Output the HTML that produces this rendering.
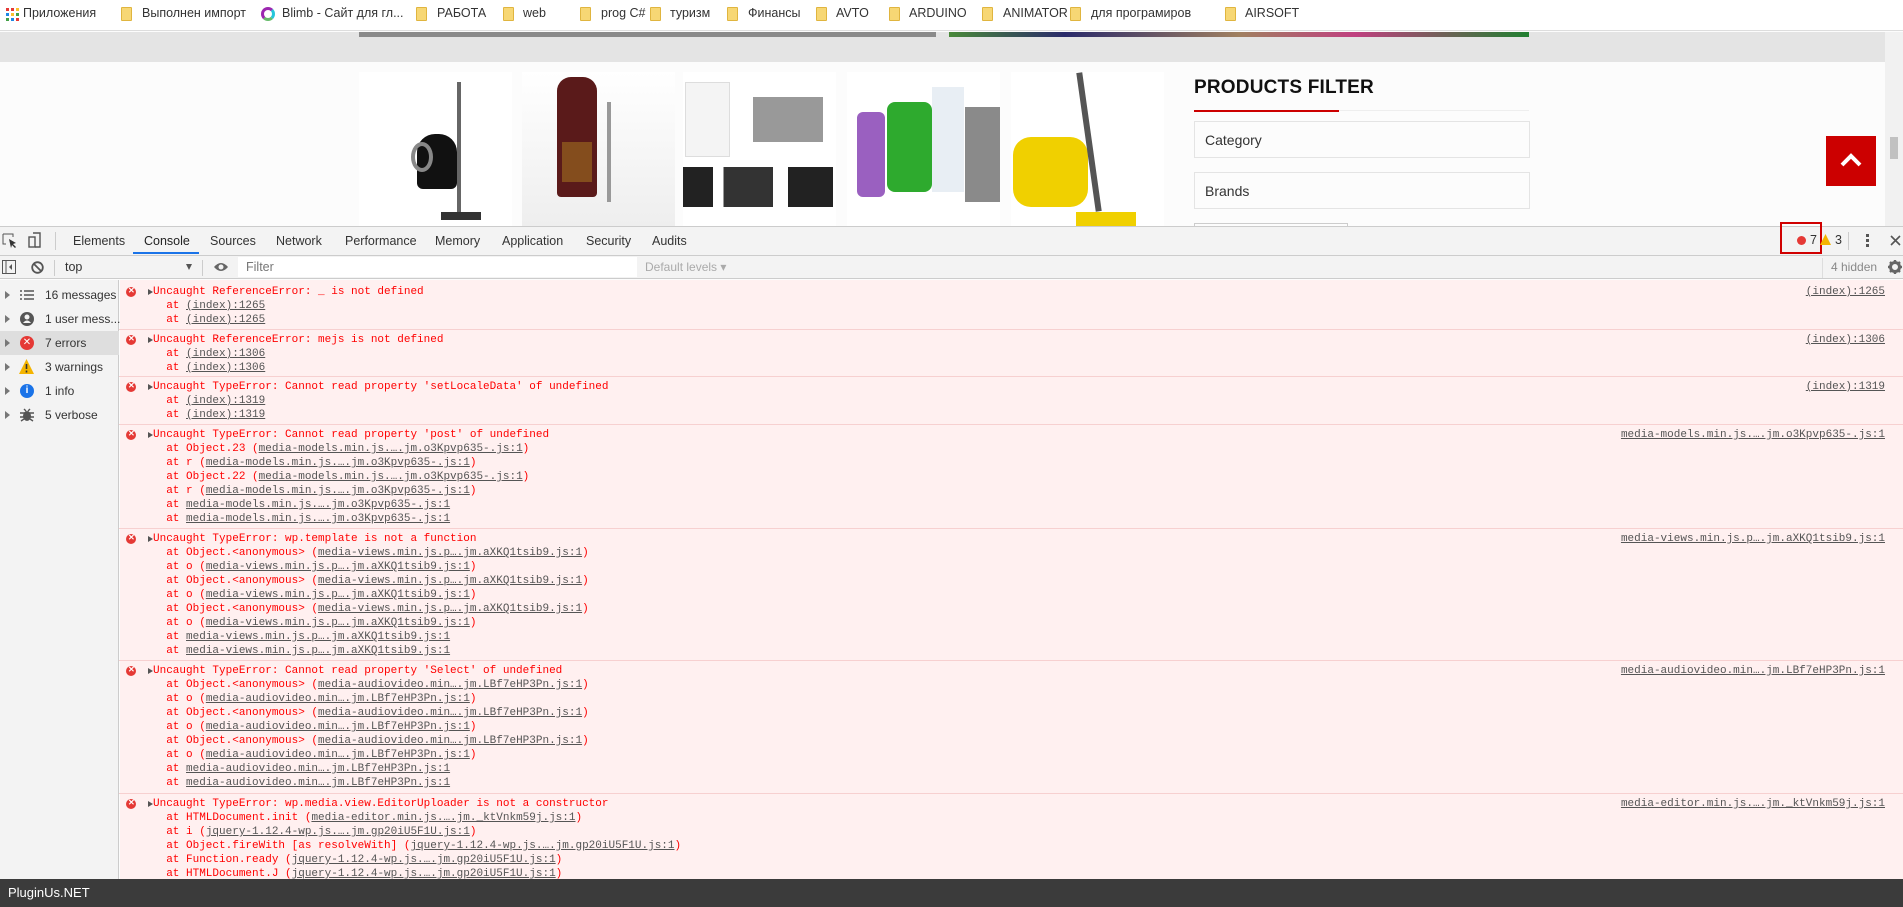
<!DOCTYPE html>
<html><head><meta charset="utf-8"><style>
*{margin:0;padding:0;box-sizing:border-box}
body{width:1903px;height:907px;overflow:hidden;background:#fcfcfc;font-family:"Liberation Sans","Noto Sans CJK SC",sans-serif;position:relative}
.abs{position:absolute}
.bm{position:absolute;top:0;height:30px;line-height:26px;font-size:12.5px;color:#333;white-space:nowrap}
.fold{position:absolute;top:7px;width:11px;height:14px;background:#f7d774;border:1px solid #e0b53f;border-radius:1px}
.card{position:absolute;top:72px;width:153px;height:155px;background:#fff}
.fbox{position:absolute;left:1194px;width:336px;height:37px;border:1px solid #e4e4e4;background:#fcfcfc;font-size:14px;color:#333;padding:10px 0 0 10px}
.tab{position:absolute;top:227px;height:28px;line-height:28px;font-size:12.5px;color:#333}
.mono{font-family:"Liberation Mono","DejaVu Sans Mono",monospace;font-size:11px;line-height:14px}
.msg{position:absolute;left:119px;right:0;border-top:1px solid #f7d0d0;color:#f00;padding-top:3px}
.msg .l{padding-left:34px;white-space:pre;height:14px}
.msg .h{padding-left:34px;white-space:pre;position:relative}
.msg .h:before{content:"";position:absolute;left:7px;top:2px;width:10px;height:10px;border-radius:50%;background:#e53935}
.msg .h:after{content:"";position:absolute;left:29px;top:4px;border-left:5px solid #555;border-top:3px solid transparent;border-bottom:3px solid transparent}
.msg .h span.x{position:absolute;left:9px;top:-1px;color:#fff;font-size:8px;font-family:"Liberation Sans",sans-serif;font-weight:bold}
.u{text-decoration:underline;color:#555}
.src{position:absolute;right:18px;top:3px;color:#555;text-decoration:underline}
.side{position:absolute;left:0;width:119px;height:24px;font-size:12px;color:#333;line-height:24px}
.side .ar{position:absolute;left:5px;top:8px;border-left:5px solid #777;border-top:4px solid transparent;border-bottom:4px solid transparent}
.side .t{position:absolute;left:45px;white-space:nowrap}
</style></head><body>

<!-- bookmarks bar -->
<div class="abs" style="left:0;top:0;width:1903px;height:31px;background:#fff;border-bottom:1px solid #ddd"></div>
<svg class="abs" style="left:6px;top:8px" width="13" height="13"><g>
<rect x="0" y="0" width="3" height="3" fill="#e53935"/><rect x="5" y="0" width="3" height="3" fill="#e53935"/><rect x="10" y="0" width="3" height="3" fill="#fbc02d"/>
<rect x="0" y="5" width="3" height="3" fill="#1e88e5"/><rect x="5" y="5" width="3" height="3" fill="#fbc02d"/><rect x="10" y="5" width="3" height="3" fill="#43a047"/>
<rect x="0" y="10" width="3" height="3" fill="#43a047"/><rect x="5" y="10" width="3" height="3" fill="#1e88e5"/><rect x="10" y="10" width="3" height="3" fill="#e53935"/></g></svg>
<div class="bm" style="left:23px">Приложения</div>
<div class="fold" style="left:121px"></div><div class="bm" style="left:142px">Выполнен импорт</div>
<div class="abs" style="left:261px;top:7px;width:14px;height:14px;border-radius:50%;border:3px solid #9c27b0;border-right-color:#26c6da;border-bottom-color:#66bb6a"></div><div class="bm" style="left:282px">Blimb - Сайт для гл...</div>
<div class="fold" style="left:416px"></div><div class="bm" style="left:437px">РАБОТА</div>
<div class="fold" style="left:503px"></div><div class="bm" style="left:523px">web</div>
<div class="fold" style="left:580px"></div><div class="bm" style="left:601px">prog C#</div>
<div class="fold" style="left:650px"></div><div class="bm" style="left:670px">туризм</div>
<div class="fold" style="left:727px"></div><div class="bm" style="left:748px">Финансы</div>
<div class="fold" style="left:816px"></div><div class="bm" style="left:836px">AVTO</div>
<div class="fold" style="left:889px"></div><div class="bm" style="left:909px">ARDUINO</div>
<div class="fold" style="left:982px"></div><div class="bm" style="left:1003px">ANIMATOR</div>
<div class="fold" style="left:1070px"></div><div class="bm" style="left:1091px">для програмиров</div>
<div class="fold" style="left:1225px"></div><div class="bm" style="left:1245px">AIRSOFT</div>

<!-- page -->
<div class="abs" style="left:0;top:32px;width:1885px;height:30px;background:#e4e4e4"></div>
<div class="abs" style="left:359px;top:32px;width:577px;height:5px;background:#8a8a8a"></div>
<div class="abs" style="left:949px;top:32px;width:580px;height:5px;background:linear-gradient(90deg,#4a8a3a,#2a2a6a 20%,#a08060 50%,#c04080 70%,#208030)"></div>
<div class="abs" style="left:1885px;top:32px;width:18px;height:195px;background:#f1f1f1"></div>
<div class="abs" style="left:1890px;top:137px;width:8px;height:22px;background:#c1c1c1"></div>

<div class="card" style="left:359px">
 <div class="abs" style="left:58px;top:62px;width:40px;height:55px;border-radius:18px 18px 6px 6px;background:#111"></div>
 <div class="abs" style="left:52px;top:70px;width:22px;height:30px;border-radius:50%;border:4px solid #888"></div>
 <div class="abs" style="left:98px;top:10px;width:4px;height:130px;background:#666"></div>
 <div class="abs" style="left:82px;top:140px;width:40px;height:8px;background:#333"></div>
</div>
<div class="card" style="left:522px;background:linear-gradient(#fff,#eee)">
 <div class="abs" style="left:35px;top:5px;width:40px;height:120px;border-radius:14px 14px 4px 4px;background:#5a1a1a"></div>
 <div class="abs" style="left:40px;top:70px;width:30px;height:40px;background:#a07020;opacity:.6"></div>
 <div class="abs" style="left:85px;top:30px;width:4px;height:100px;background:#999"></div>
</div>
<div class="card" style="left:683px">
 <div class="abs" style="left:2px;top:10px;width:45px;height:75px;background:#f4f4f4;border:1px solid #ddd"></div>
 <div class="abs" style="left:70px;top:25px;width:70px;height:45px;background:#999"></div>
 <div class="abs" style="left:0;top:95px;width:150px;height:40px;background:linear-gradient(90deg,#222 0 20%,#fff 20% 27%,#333 27% 60%,#fff 60% 70%,#222 70%)"></div>
</div>
<div class="card" style="left:847px">
 <div class="abs" style="left:10px;top:40px;width:28px;height:85px;background:#9a60c0;border-radius:6px"></div>
 <div class="abs" style="left:40px;top:30px;width:45px;height:90px;background:#2eaa2e;border-radius:8px"></div>
 <div class="abs" style="left:85px;top:15px;width:32px;height:105px;background:#e8eef4"></div>
 <div class="abs" style="left:118px;top:35px;width:35px;height:95px;background:#8a8a8a"></div>
</div>
<div class="card" style="left:1011px">
 <div class="abs" style="left:2px;top:65px;width:75px;height:70px;background:#f0d000;border-radius:18px"></div>
 <div class="abs" style="left:75px;top:0;width:6px;height:140px;background:#555;transform:rotate(-8deg)"></div>
 <div class="abs" style="left:65px;top:140px;width:60px;height:15px;background:#f0d000"></div>
</div>

<div class="abs" style="left:1194px;top:77px;font-size:19px;font-weight:bold;color:#111;letter-spacing:.2px">PRODUCTS FILTER</div>
<div class="abs" style="left:1194px;top:110px;width:145px;height:2px;background:#cc0000"></div>
<div class="abs" style="left:1339px;top:110px;width:190px;height:1px;background:#eee"></div>
<div class="fbox" style="top:121px">Category</div>
<div class="fbox" style="top:172px">Brands</div>
<div class="abs" style="left:1194px;top:223px;width:154px;height:5px;border:1px solid #ccc;border-bottom:none"></div>
<div class="abs" style="left:1826px;top:136px;width:50px;height:50px;background:#cc0000"></div>
<svg class="abs" style="left:1839px;top:152px" width="24" height="16"><path d="M3 13 L12 4 L21 13" stroke="#fff" stroke-width="4" fill="none"/></svg>

<!-- devtools tab bar -->
<div class="abs" style="left:0;top:226px;width:1903px;height:30px;background:#f3f3f3;border-top:1px solid #ccc;border-bottom:1px solid #ccc"></div>
<svg class="abs" style="left:2px;top:233px" width="16" height="16"><path d="M1 1h10v3M1 1v10h3" stroke="#555" fill="none"/><path d="M7 6l7 4-3 1 3 3-1 1-3-3-1 3z" fill="#333"/></svg>
<svg class="abs" style="left:28px;top:232px" width="14" height="17"><rect x="1" y="5" width="6" height="10" fill="none" stroke="#555" stroke-width="1.4"/><path d="M5 1h7v14H7" fill="none" stroke="#555" stroke-width="1.4"/></svg>
<div class="abs" style="left:55px;top:232px;width:1px;height:18px;background:#ccc"></div>
<div class="tab" style="left:73px">Elements</div>
<div class="tab" style="left:144px;color:#222">Console</div>
<div class="abs" style="left:133px;top:252px;width:66px;height:2px;background:#1a73e8"></div>
<div class="tab" style="left:210px">Sources</div>
<div class="tab" style="left:276px">Network</div>
<div class="tab" style="left:345px">Performance</div>
<div class="tab" style="left:435px">Memory</div>
<div class="tab" style="left:502px">Application</div>
<div class="tab" style="left:586px">Security</div>
<div class="tab" style="left:652px">Audits</div>
<div class="abs" style="left:1780px;top:222px;width:42px;height:32px;border:2px solid #d00000"></div>
<div class="abs" style="left:1797px;top:236px;width:9px;height:9px;border-radius:50%;background:#e53935"></div>
<div class="tab" style="left:1810px;top:226px">7</div>
<svg class="abs" style="left:1820px;top:234px" width="11" height="11"><path d="M5.5 0L11 11H0z" fill="#f4b400"/></svg>
<div class="tab" style="left:1835px;top:226px">3</div>
<div class="abs" style="left:1848px;top:232px;width:1px;height:18px;background:#ccc"></div>
<div class="abs" style="left:1866px;top:234px;width:3px;height:3px;background:#555;box-shadow:0 5px 0 #555,0 10px 0 #555"></div>
<svg class="abs" style="left:1890px;top:235px" width="11" height="11"><path d="M1 1L10 10M10 1L1 10" stroke="#555" stroke-width="1.6"/></svg>

<!-- toolbar -->
<div class="abs" style="left:0;top:256px;width:1903px;height:23px;background:#f3f3f3;border-bottom:1px solid #ccc"></div>
<svg class="abs" style="left:2px;top:260px" width="14" height="14"><rect x="0.5" y="0.5" width="13" height="13" fill="none" stroke="#555"/><path d="M4 1v12" stroke="#555"/><path d="M10 4L7 7l3 3z" fill="#555"/></svg>
<svg class="abs" style="left:31px;top:261px" width="13" height="13"><circle cx="6.5" cy="6.5" r="5.3" fill="none" stroke="#555" stroke-width="1.8"/><path d="M3 3l7 7" stroke="#555" stroke-width="1.8"/></svg>
<div class="abs" style="left:54px;top:260px;width:1px;height:16px;background:#ccc"></div>
<div class="abs" style="left:65px;top:256px;font-size:12.5px;line-height:22px;color:#333">top</div>
<div class="abs" style="left:186px;top:264px;border-top:6px solid #555;border-left:3.5px solid transparent;border-right:3.5px solid transparent"></div>
<div class="abs" style="left:202px;top:260px;width:1px;height:16px;background:#ccc"></div>
<svg class="abs" style="left:213px;top:261px" width="16" height="12"><path d="M1 6Q8 -2 15 6Q8 14 1 6z" fill="#666"/><circle cx="8" cy="6" r="2.5" fill="#f3f3f3"/></svg>
<div class="abs" style="left:238px;top:257px;width:399px;height:20px;background:#fff;font-size:12.5px;color:#777;line-height:20px;padding-left:8px">Filter</div>
<div class="abs" style="left:645px;top:256px;font-size:12px;line-height:22px;color:#aaa">Default levels ▾</div>
<div class="abs" style="left:1822px;top:258px;width:1px;height:20px;background:#ddd"></div>
<div class="abs" style="left:1831px;top:256px;font-size:12px;line-height:22px;color:#888">4 hidden</div>
<svg class="abs" style="left:1888px;top:260px" width="14" height="14"><circle cx="7" cy="7" r="4.5" fill="none" stroke="#666" stroke-width="3"/><path d="M7 0v3M7 11v3M0 7h3M11 7h3M2 2l2 2M10 10l2 2M12 2l-2 2M2 12l2-2" stroke="#666" stroke-width="2.4"/></svg>

<!-- sidebar -->
<div class="abs" style="left:0;top:280px;width:119px;height:600px;background:#f3f3f3;border-right:1px solid #ccc"></div>
<div class="side" style="top:283px"><div class="ar"></div><svg class="abs" style="left:20px;top:7px" width="14" height="10"><path d="M0 1h2M4 1h10M0 5h2M4 5h10M0 9h2M4 9h10" stroke="#555" stroke-width="1.6"/></svg><div class="t">16 messages</div></div>
<div class="side" style="top:307px"><div class="ar"></div><svg class="abs" style="left:20px;top:5px" width="14" height="14"><circle cx="7" cy="7" r="7" fill="#555"/><circle cx="7" cy="5" r="2.5" fill="#f3f3f3"/><path d="M3 11q4-5 8 0" fill="#f3f3f3"/></svg><div class="t">1 user mess...</div></div>
<div class="side" style="top:331px;background:#dedede"><div class="ar"></div><div class="abs" style="left:20px;top:5px;width:14px;height:14px;border-radius:50%;background:#e53935;color:#fff;font-size:10px;line-height:14px;text-align:center">✕</div><div class="t">7 errors</div></div>
<div class="side" style="top:355px"><div class="ar"></div><svg class="abs" style="left:19px;top:4px" width="15" height="15"><path d="M7.5 0L15 15H0z" fill="#f4b400"/><path d="M7.5 5v5M7.5 11.5v2" stroke="#333" stroke-width="1.6"/></svg><div class="t">3 warnings</div></div>
<div class="side" style="top:379px"><div class="ar"></div><div class="abs" style="left:20px;top:5px;width:14px;height:14px;border-radius:50%;background:#1a73e8;color:#fff;font-size:10px;font-weight:bold;line-height:14px;text-align:center">i</div><div class="t">1 info</div></div>
<div class="side" style="top:403px"><div class="ar"></div><svg class="abs" style="left:20px;top:5px" width="14" height="14"><ellipse cx="7" cy="8" rx="4" ry="5" fill="#555"/><path d="M0 5h14M0 9h14M1 13l3-2M13 13l-3-2M4 1l2 2M10 1l-2 2" stroke="#555" stroke-width="1.4"/></svg><div class="t">5 verbose</div></div>

<!-- console messages -->
<div class="abs" style="left:120px;top:280px;width:1783px;height:600px;background:#fff0f0"></div>
<div class="mono">
<div class="msg" style="top:282px;height:47px;border-top:none"><div class="h"><span class="x">✕</span>Uncaught ReferenceError: _ is not defined</div><div class="l">  at <span class="u">(index):1265</span></div><div class="l">  at <span class="u">(index):1265</span></div><div class="src">(index):1265</div></div>
<div class="msg" style="top:329px;height:47px"><div class="h"><span class="x">✕</span>Uncaught ReferenceError: mejs is not defined</div><div class="l">  at <span class="u">(index):1306</span></div><div class="l">  at <span class="u">(index):1306</span></div><div class="src">(index):1306</div></div>
<div class="msg" style="top:376px;height:48px"><div class="h"><span class="x">✕</span>Uncaught TypeError: Cannot read property 'setLocaleData' of undefined</div><div class="l">  at <span class="u">(index):1319</span></div><div class="l">  at <span class="u">(index):1319</span></div><div class="src">(index):1319</div></div>
<div class="msg" style="top:424px;height:104px"><div class="h"><span class="x">✕</span>Uncaught TypeError: Cannot read property 'post' of undefined</div>
<div class="l">  at Object.23 (<span class="u">media-models.min.js.….jm.o3Kpvp635-.js:1</span>)</div>
<div class="l">  at r (<span class="u">media-models.min.js.….jm.o3Kpvp635-.js:1</span>)</div>
<div class="l">  at Object.22 (<span class="u">media-models.min.js.….jm.o3Kpvp635-.js:1</span>)</div>
<div class="l">  at r (<span class="u">media-models.min.js.….jm.o3Kpvp635-.js:1</span>)</div>
<div class="l">  at <span class="u">media-models.min.js.….jm.o3Kpvp635-.js:1</span></div>
<div class="l">  at <span class="u">media-models.min.js.….jm.o3Kpvp635-.js:1</span></div>
<div class="src">media-models.min.js.….jm.o3Kpvp635-.js:1</div></div>
<div class="msg" style="top:528px;height:132px"><div class="h"><span class="x">✕</span>Uncaught TypeError: wp.template is not a function</div>
<div class="l">  at Object.&lt;anonymous&gt; (<span class="u">media-views.min.js.p….jm.aXKQ1tsib9.js:1</span>)</div>
<div class="l">  at o (<span class="u">media-views.min.js.p….jm.aXKQ1tsib9.js:1</span>)</div>
<div class="l">  at Object.&lt;anonymous&gt; (<span class="u">media-views.min.js.p….jm.aXKQ1tsib9.js:1</span>)</div>
<div class="l">  at o (<span class="u">media-views.min.js.p….jm.aXKQ1tsib9.js:1</span>)</div>
<div class="l">  at Object.&lt;anonymous&gt; (<span class="u">media-views.min.js.p….jm.aXKQ1tsib9.js:1</span>)</div>
<div class="l">  at o (<span class="u">media-views.min.js.p….jm.aXKQ1tsib9.js:1</span>)</div>
<div class="l">  at <span class="u">media-views.min.js.p….jm.aXKQ1tsib9.js:1</span></div>
<div class="l">  at <span class="u">media-views.min.js.p….jm.aXKQ1tsib9.js:1</span></div>
<div class="src">media-views.min.js.p….jm.aXKQ1tsib9.js:1</div></div>
<div class="msg" style="top:660px;height:133px"><div class="h"><span class="x">✕</span>Uncaught TypeError: Cannot read property 'Select' of undefined</div>
<div class="l">  at Object.&lt;anonymous&gt; (<span class="u">media-audiovideo.min….jm.LBf7eHP3Pn.js:1</span>)</div>
<div class="l">  at o (<span class="u">media-audiovideo.min….jm.LBf7eHP3Pn.js:1</span>)</div>
<div class="l">  at Object.&lt;anonymous&gt; (<span class="u">media-audiovideo.min….jm.LBf7eHP3Pn.js:1</span>)</div>
<div class="l">  at o (<span class="u">media-audiovideo.min….jm.LBf7eHP3Pn.js:1</span>)</div>
<div class="l">  at Object.&lt;anonymous&gt; (<span class="u">media-audiovideo.min….jm.LBf7eHP3Pn.js:1</span>)</div>
<div class="l">  at o (<span class="u">media-audiovideo.min….jm.LBf7eHP3Pn.js:1</span>)</div>
<div class="l">  at <span class="u">media-audiovideo.min….jm.LBf7eHP3Pn.js:1</span></div>
<div class="l">  at <span class="u">media-audiovideo.min….jm.LBf7eHP3Pn.js:1</span></div>
<div class="src">media-audiovideo.min….jm.LBf7eHP3Pn.js:1</div></div>
<div class="msg" style="top:793px;height:86px;overflow:hidden"><div class="h"><span class="x">✕</span>Uncaught TypeError: wp.media.view.EditorUploader is not a constructor</div>
<div class="l">  at HTMLDocument.init (<span class="u">media-editor.min.js.….jm._ktVnkm59j.js:1</span>)</div>
<div class="l">  at i (<span class="u">jquery-1.12.4-wp.js.….jm.gp20iU5F1U.js:1</span>)</div>
<div class="l">  at Object.fireWith [as resolveWith] (<span class="u">jquery-1.12.4-wp.js.….jm.gp20iU5F1U.js:1</span>)</div>
<div class="l">  at Function.ready (<span class="u">jquery-1.12.4-wp.js.….jm.gp20iU5F1U.js:1</span>)</div>
<div class="l">  at HTMLDocument.J (<span class="u">jquery-1.12.4-wp.js.….jm.gp20iU5F1U.js:1</span>)</div>
<div class="src">media-editor.min.js.….jm._ktVnkm59j.js:1</div></div>
</div>

<!-- bottom bar -->
<div class="abs" style="left:0;top:879px;width:1903px;height:28px;background:#3b3b3b;color:#fff;font-size:13px;line-height:28px;padding-left:8px">PluginUs.NET</div>
</body></html>
